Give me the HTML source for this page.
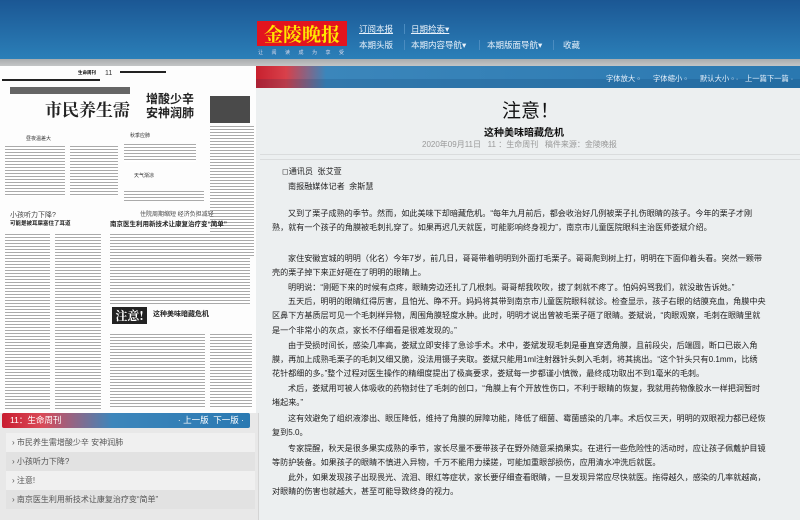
<!DOCTYPE html>
<html><head><meta charset="utf-8"><style>
*{margin:0;padding:0;box-sizing:border-box}
body{width:800px;height:520px;overflow:hidden;background:#eceff0;font-family:"Liberation Sans","Noto Sans CJK SC",sans-serif;position:relative}
.abs{position:absolute;white-space:nowrap}
#hdr{position:absolute;left:0;top:0;width:800px;height:59px;background:linear-gradient(#1b5794,#2b7fb8)}
#gray{position:absolute;left:0;top:59px;width:800px;height:7px;background:linear-gradient(#a9acae,#c3c5c6)}
#logo{position:absolute;left:257px;top:21px;width:90px;height:25px;background:#e3141e;color:#ffe600;font:bold 19px "Noto Serif CJK SC",serif;letter-spacing:0px;text-align:center;line-height:25px;white-space:nowrap;overflow:hidden}
.nav{color:#e8f1fa;font-size:8.5px}
.sep{position:absolute;width:1px;height:10px;background:#4b8cc0}
#bar{position:absolute;left:256px;top:66px;width:544px;height:22px;background:linear-gradient(90deg,#c8202e 0,#d8404a 30px,#3b86bb 70px,#2a78b0 100%)}
#bar:after{content:"";position:absolute;left:0;right:0;bottom:0;height:9px;background:rgba(0,40,90,.15)}
#paper{position:absolute;left:0;top:66px;width:256px;height:347px;background:#fdfdfd;overflow:hidden}
.txt{position:absolute;background:repeating-linear-gradient(#aaa 0,#aaa 1px,#fff 1px,#fff 3px)}
#left{position:absolute;left:0;top:413px;width:259px;height:107px;background:#e8e8e8;border-right:1px solid #d4d4d4}
#lbar{position:absolute;left:2px;top:0;width:248px;height:15px;background:linear-gradient(90deg,#c91d30,#d94a58 40px,#3d86bb 110px,#2a79b2);border-radius:2px;color:#fff;font-size:8.5px;line-height:15px}
.li{position:absolute;left:6px;width:249px;height:19px;font-size:8px;color:#555;line-height:19px;padding-left:6px}
.a{position:absolute;font-size:8.1px;color:#222;white-space:nowrap}
.bt{position:absolute;top:74px;font-size:7.3px;color:#e6f0fa;white-space:nowrap}
</style></head><body>
<div id="hdr"></div><div id="gray"></div>
<div id="logo">金陵晚报</div>
<div class="abs" style="left:258px;top:49px;font-size:5px;color:#dde;letter-spacing:8.5px">让阅读成为享受</div>
<div class="abs nav" style="left:359px;top:23px;text-decoration:underline">订阅本报</div>
<div class="sep" style="left:404px;top:24px"></div>
<div class="abs nav" style="left:411px;top:23px;text-decoration:underline">日期检索▾</div>
<div class="abs nav" style="left:359px;top:39px">本期头版</div>
<div class="sep" style="left:404px;top:40px"></div>
<div class="abs nav" style="left:411px;top:39px">本期内容导航▾</div>
<div class="sep" style="left:479px;top:40px"></div>
<div class="abs nav" style="left:487px;top:39px">本期版面导航▾</div>
<div class="sep" style="left:553px;top:40px"></div>
<div class="abs nav" style="left:563px;top:39px">收藏</div>

<div id="bar"></div>
<div class="bt" style="left:606px">字体放大 ▫</div>
<div class="bt" style="left:653px">字体缩小 ▫</div>
<div class="bt" style="left:700px">默认大小 ▫ ·</div>
<div class="bt" style="left:745px">上一篇下一篇 ·</div>

<div id="paper">
 <div class="abs" style="left:2px;top:13px;width:98px;height:2px;background:#222"></div>
 <div class="abs" style="left:78px;top:4px;font-size:4.5px;font-weight:bold">生命周刊</div>
 <div class="abs" style="left:105px;top:4px;font-size:7px;color:#333">11</div>
 <div class="abs" style="left:120px;top:5px;width:46px;height:2px;background:#222"></div>
 <div class="abs" style="left:10px;top:21px;width:120px;height:7px;background:#666"></div>
 <div class="abs" style="left:45px;top:30px;font:bold 17px 'Noto Serif CJK SC',serif;color:#222">市民养生需</div>
 <div class="abs" style="left:146px;top:26px;font:bold 12px 'Noto Sans CJK SC',sans-serif;color:#222;line-height:14px">增酸少辛<br>安神润肺</div>
 <div class="abs" style="left:210px;top:30px;width:40px;height:27px;background:#4a4a4a"></div>
 <div class="txt" style="left:5px;top:80px;width:60px;height:50px"></div>
 <div class="txt" style="left:70px;top:80px;width:48px;height:50px"></div>
 <div class="txt" style="left:124px;top:78px;width:72px;height:18px"></div>
 <div class="txt" style="left:210px;top:60px;width:44px;height:130px"></div>
 <div class="txt" style="left:124px;top:125px;width:80px;height:10px"></div>
 <div class="abs" style="left:26px;top:69px;font-size:5px;color:#333">昼夜温差大</div>
 <div class="abs" style="left:130px;top:66px;font-size:5px;color:#333">秋季应肺</div>
 <div class="abs" style="left:134px;top:106px;font-size:5px;color:#333">天气渐凉</div>
 <div class="abs" style="left:10px;top:144px;font-size:7px;color:#444">小孩听力下降?</div>
 <div class="abs" style="left:10px;top:153px;font-size:5.5px;font-weight:bold;color:#222">可能是被耳屎塞住了耳道</div>
 <div class="abs" style="left:140px;top:143px;font-size:6px;color:#444">住院周期缩短 经济负担减轻</div>
 <div class="abs" style="left:110px;top:152px;font-size:6.5px;font-weight:bold;color:#222">南京医生利用新技术让康复治疗变“简单”</div>
 <div class="txt" style="left:5px;top:168px;width:45px;height:175px"></div>
 <div class="txt" style="left:55px;top:168px;width:46px;height:175px"></div>
 <div class="txt" style="left:110px;top:168px;width:140px;height:70px"></div>
 <div class="abs" style="left:112px;top:241px;width:35px;height:17px;background:#222;color:#fff;font:bold 12px 'Noto Serif CJK SC',serif;line-height:17px;text-align:center">注意!</div>
 <div class="abs" style="left:153px;top:243px;font-size:7px;font-weight:bold;color:#222">这种美味暗藏危机</div>
 <div class="txt" style="left:110px;top:268px;width:95px;height:75px"></div>
 <div class="txt" style="left:210px;top:268px;width:42px;height:75px"></div>
</div>

<div id="left">
 <div id="lbar"><span style="margin-left:8px">11：生命周刊</span><span style="position:absolute;right:6px">· 上一版 &nbsp;下一版 ·</span></div>
 <div class="li" style="top:20px;background:#f0f0f0">› 市民养生需增酸少辛 安神润肺</div>
 <div class="li" style="top:39px;background:#e2e2e2">› 小孩听力下降?</div>
 <div class="li" style="top:58px;background:#f0f0f0">› 注意!</div>
 <div class="li" style="top:77px;background:#e2e2e2">› 南京医生利用新技术让康复治疗变“简单”</div>
</div>

<div class="abs" style="left:502px;top:96px;font-size:19px;color:#111">注意！</div>
<div class="abs" style="left:484px;top:124px;font-size:10px;font-weight:bold;color:#111">这种美味暗藏危机</div>
<div class="abs" style="left:422px;top:139px;font-size:8px;color:#999">2020年09月11日 &nbsp; 11 ：生命周刊 &nbsp; 稿件来源：金陵晚报</div>
<div class="abs" style="left:260px;top:154px;width:540px;height:1px;background:#dadcdd"></div>
<div class="abs" style="left:260px;top:159px;width:540px;height:1px;background:#dadcdd"></div>

<div class="a" style="left:282px;top:166px">◻通讯员 &nbsp;张艾萱</div>
<div class="a" style="left:288px;top:181px">南报融媒体记者 &nbsp;余斯慧</div>
<div class="a" style="left:288px;top:208px">又到了栗子成熟的季节。然而，如此美味下却暗藏危机。“每年九月前后，都会收治好几例被栗子扎伤眼睛的孩子。今年的栗子才刚</div>
<div class="a" style="left:272px;top:222px">熟，就有一个孩子的角膜被毛刺扎穿了。如果再迟几天就医，可能影响终身视力”，南京市儿童医院眼科主治医师娄斌介绍。</div>
<div class="a" style="left:288px;top:253px">家住安徽宣城的明明（化名）今年7岁，前几日，哥哥带着明明到外面打毛栗子。哥哥爬到树上打，明明在下面仰着头看。突然一颗带</div>
<div class="a" style="left:272px;top:267px">壳的栗子掉下来正好砸在了明明的眼睛上。</div>
<div class="a" style="left:288px;top:282px">明明说：“刚砸下来的时候有点疼，眼睛旁边还扎了几根刺。哥哥帮我吹吹，拔了刺就不疼了。怕妈妈骂我们，就没敢告诉她。”</div>
<div class="a" style="left:288px;top:296px">五天后，明明的眼睛红得厉害，且怕光、睁不开。妈妈将其带到南京市儿童医院眼科就诊。检查显示，孩子右眼的结膜充血，角膜中央</div>
<div class="a" style="left:272px;top:310px">区鼻下方基质层可见一个毛刺样异物，周围角膜轻度水肿。此时，明明才说出曾被毛栗子砸了眼睛。娄斌说，“肉眼观察，毛刺在眼睛里就</div>
<div class="a" style="left:272px;top:325px">是一个非常小的灰点，家长不仔细看是很难发现的。”</div>
<div class="a" style="left:288px;top:340px">由于受损时间长，感染几率高，娄斌立即安排了急诊手术。术中，娄斌发现毛刺是垂直穿透角膜，且前段尖，后端圆，断口已嵌入角</div>
<div class="a" style="left:272px;top:354px">膜，再加上成熟毛栗子的毛刺又细又脆，没法用镊子夹取。娄斌只能用1ml注射器针头刺入毛刺，将其挑出。“这个针头只有0.1mm，比绣</div>
<div class="a" style="left:272px;top:368px">花针都细的多。”整个过程对医生操作的精细度提出了极高要求，娄斌每一步都谨小慎微，最终成功取出不到1毫米的毛刺。</div>
<div class="a" style="left:288px;top:383px">术后，娄斌用可被人体吸收的药物封住了毛刺的创口，“角膜上有个开放性伤口，不利于眼睛的恢复，我就用药物像胶水一样把洞暂时</div>
<div class="a" style="left:272px;top:397px">堵起来。”</div>
<div class="a" style="left:288px;top:413px">这有效避免了组织液渗出、眼压降低，维持了角膜的屏障功能，降低了细菌、霉菌感染的几率。术后仅三天，明明的双眼视力都已经恢</div>
<div class="a" style="left:272px;top:427px">复到5.0。</div>
<div class="a" style="left:288px;top:443px">专家提醒，秋天是很多果实成熟的季节，家长尽量不要带孩子在野外随意采摘果实。在进行一些危险性的活动时，应让孩子佩戴护目镜</div>
<div class="a" style="left:272px;top:457px">等防护装备。如果孩子的眼睛不慎进入异物，千万不能用力揉搓，可能加重眼部损伤，应用清水冲洗后就医。</div>
<div class="a" style="left:288px;top:472px">此外，如果发现孩子出现畏光、流泪、眼红等症状，家长要仔细查看眼睛，一旦发现异常应尽快就医。拖得越久，感染的几率就越高，</div>
<div class="a" style="left:272px;top:486px">对眼睛的伤害也就越大，甚至可能导致终身的视力。</div>
</body></html>
